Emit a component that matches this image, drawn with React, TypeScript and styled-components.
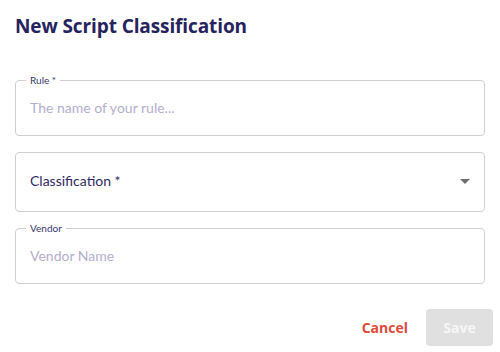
import styled, { createGlobalStyle } from 'styled-components';

const GlobalStyle = createGlobalStyle`
  body {
    margin: 0;
    background: #ffffff;
    font-family: 'Lato', 'Noto Sans', sans-serif;
  }
`;

const Dialog = styled.div`
  width: 500px;
  height: 352px;
  box-sizing: border-box;
  padding: 12px 15px 0 15px;
  display: flex;
  flex-direction: column;
`;

const Title = styled.h2`
  margin: 0;
  font-family: 'Open Sans', sans-serif;
  font-weight: 700;
  font-size: 19px;
  line-height: 28px;
  color: #26235e;
  letter-spacing: -0.1px;
`;

const Form = styled.div`
  display: flex;
  flex-direction: column;
  margin-top: 35px;
`;

const Field = styled.fieldset<{ $gap?: number }>`
  margin: ${p => p.$gap ?? 0}px 0 0 0;
  padding: 0 14px;
  height: 61px;
  box-sizing: border-box;
  border: 1px solid #cfcfcf;
  border-radius: 4px;
  min-width: 0;
`;

const Legend = styled.legend`
  padding: 0 4px;
  margin-left: -4px;
  font-size: 10px;
  line-height: 10px;
  color: #3b3770;
`;

const Placeholder = styled.div`
  font-size: 14px;
  line-height: 20px;
  color: #b3aecd;
  margin-top: 13px;
`;

const SelectBox = styled.div`
  margin-top: 16px;
  height: 60px;
  box-sizing: border-box;
  border: 1px solid #cfcfcf;
  border-radius: 4px;
  padding: 0 14px 4px 14px;
  display: flex;
  align-items: center;
  justify-content: space-between;
`;

const SelectText = styled.span`
  font-size: 14px;
  color: #2f2b66;
`;

const Arrow = styled.span`
  width: 0;
  height: 0;
  border-left: 5px solid transparent;
  border-right: 5px solid transparent;
  border-top: 5px solid #6f6f6f;
  margin-top: 3px;
`;

const Actions = styled.div`
  display: flex;
  justify-content: flex-end;
  align-items: center;
  gap: 18px;
  margin-top: 25px;
  margin-right: -8px;
`;

const CancelButton = styled.button`
  border: none;
  background: none;
  font-family: 'Open Sans', sans-serif;
  font-weight: 700;
  font-size: 14px;
  color: #e04b3b;
  padding: 0;
  cursor: pointer;
`;

const SaveButton = styled.button<{ disabled?: boolean }>`
  width: 67px;
  height: 37px;
  border: none;
  border-radius: 4px;
  background: ${p => (p.disabled ? '#e0e0e0' : '#26235e')};
  color: ${p => (p.disabled ? '#f6f6f6' : '#ffffff')};
  font-family: 'Open Sans', sans-serif;
  font-weight: 700;
  font-size: 14px;
`;

const App = () => {
  return (
    <>
      <GlobalStyle />
      <Dialog>
        <Title>New Script Classification</Title>
        <Form>
          <Field>
            <Legend>Rule *</Legend>
            <Placeholder>The name of your rule...</Placeholder>
          </Field>
          <SelectBox>
            <SelectText>Classification *</SelectText>
            <Arrow />
          </SelectBox>
          <Field $gap={11}>
            <Legend>Vendor</Legend>
            <Placeholder>Vendor Name</Placeholder>
          </Field>
        </Form>
        <Actions>
          <CancelButton>Cancel</CancelButton>
          <SaveButton disabled>Save</SaveButton>
        </Actions>
      </Dialog>
    </>
  );
};

export default App;
